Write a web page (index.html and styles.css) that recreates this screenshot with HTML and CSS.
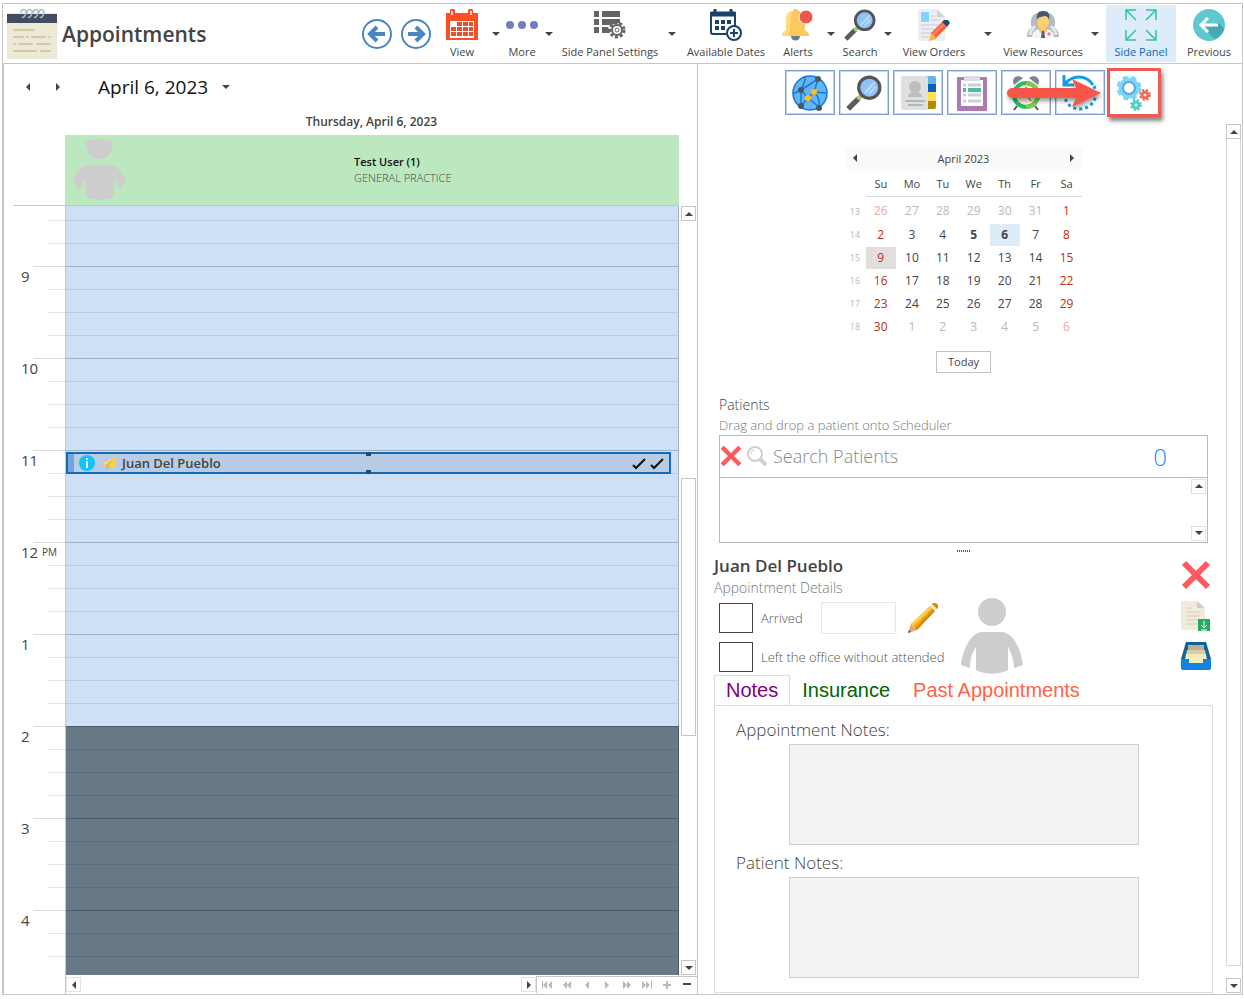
FILE: index.html
```html
<!DOCTYPE html>
<html lang="en">
<head>
    <meta charset="UTF-8">
    <meta name="viewport" content="width=device-width, initial-scale=1.0">
    <title>Appointments</title>
    <link rel="stylesheet" href="styles.css">
</head>
<body>
    <!-- shared glyphs -->
    <svg class="sprite" width="0" height="0" aria-hidden="true">
        <symbol id="tri-up" viewBox="0 0 8 8"><path d="M4 2l4 4H0z"/></symbol>
        <symbol id="tri-down" viewBox="0 0 8 8"><path d="M0 2h8L4 6z"/></symbol>
        <symbol id="tri-left" viewBox="0 0 8 8"><path d="M6 0v8L2 4z"/></symbol>
        <symbol id="tri-right" viewBox="0 0 8 8"><path d="M2 0v8l4-4z"/></symbol>
        <symbol id="magnifier" viewBox="0 0 34 34">
            <path d="M2 32L12 22" stroke="#5b5b5b" stroke-width="5"/>
            <path d="M11 23l3-3" stroke="#a5cf6b" stroke-width="4"/>
            <path d="M14 20l2-2" stroke="#555" stroke-width="2"/>
            <circle cx="22" cy="12" r="10" fill="#8fc1fb" stroke="#555" stroke-width="3"/>
            <path d="M18 17l9-10M22 18l6-7" stroke="#b9dafd" stroke-width="2"/>
        </symbol>
        <symbol id="person" viewBox="0 0 62 76">
            <circle cx="31" cy="14" r="14" fill="#cdcdcd"/>
            <path d="M20 34h22c10 2 18 16 20 33l-9 3c0-8-3-16-6-21v23c-10 5-22 5-32 0V49c-4 5-6 13-6 21l-9-3C2 50 10 36 20 34z" fill="#cdcdcd"/>
        </symbol>
        <symbol id="cross" viewBox="0 0 30 30"><path d="M3 3l24 24M27 3L3 27" stroke="#ff5a5f" stroke-width="6"/></symbol>
    </svg>

    <div class="app">
        <header class="toolbar">
            <div class="brand">
                <svg width="50" height="50" viewBox="0 0 50 50">
                    <rect y="4" width="50" height="46" fill="#ece9d7"/>
                    <rect y="5" width="50" height="9" fill="#434c63"/>
                    <g fill="none" stroke="#aeb8c4" stroke-width="1.500"><path d="M14 4c0-5 6-4 5 0s-3 5-4 4M20 4c0-5 6-4 5 0s-3 5-4 4M26 4c0-5 6-4 5 0s-3 5-4 4M32 4c0-5 6-4 5 0s-3 5-4 4"/></g>
                    <g stroke="#cfcaa8" stroke-width="2" stroke-linecap="round"><path d="M7 21h20M7 28h9M20 28h1M25 28h13M42 28h1M7 35h1M12 35h13M30 35h13M7 42h22M34 42h9"/></g>
                </svg>
                <h1>Appointments</h1>
            </div>
            <button class="round" aria-label="Back">
                <svg width="30" height="30" viewBox="0 0 30 30"><circle cx="15" cy="15" r="14" fill="none" stroke="#4a86c2" stroke-width="2"/><path d="M23 15H8M15 8l-7 7 7 7" fill="none" stroke="#4a86c2" stroke-width="4"/></svg>
            </button>
            <button class="round" aria-label="Forward">
                <svg width="30" height="30" viewBox="0 0 30 30"><circle cx="15" cy="15" r="14" fill="none" stroke="#4a86c2" stroke-width="2"/><path d="M7 15h15M15 8l7 7-7 7" fill="none" stroke="#4a86c2" stroke-width="4"/></svg>
            </button>
            <button class="tool">
                <svg width="32" height="32" viewBox="0 0 32 32"><path d="M0 4h4V2a2 2 0 0 1 5 0v2h13V2a2 2 0 0 1 5 0v2h5v27H0z" fill="#fd4f23"/><path d="M6 2v4M25 2v4" stroke="#fff" stroke-width="1.500"/><path d="M4 12h24v17H4z" fill="#fff"/><path d="M11 13h5v4h-5zM17 13h5v4h-5zM23 13h4v4h-4zM5 18h5v4H5zM11 18h5v4h-5zM17 18h5v4h-5zM23 18h4v4h-4zM5 23h5v4H5zM11 23h5v4h-5zM17 23h5v4h-5zM23 23h4v4h-4z" fill="#e8502b"/></svg>
                <span>View</span>
            </button>
            <button class="caret" aria-label="View menu"><svg><use href="#tri-down"/></svg></button>
            <button class="tool">
                <svg width="32" height="32" viewBox="0 0 32 32" fill="#7180c4"><circle cx="4" cy="16" r="4"/><circle cx="16" cy="16" r="4"/><circle cx="28" cy="16" r="4"/></svg>
                <span>More</span>
            </button>
            <button class="caret" aria-label="More menu"><svg><use href="#tri-down"/></svg></button>
            <button class="tool">
                <svg width="32" height="32" viewBox="0 0 32 32"><path d="M0 2h5v6H0zM8 2h18v6H8zM0 10h5v6H0zM8 10h18v4l-10 2H8zM0 18h5v6H0zM8 18h6l2 6H8z" fill="#646464"/><circle cx="23" cy="21" r="7" fill="none" stroke="#646464" stroke-width="3" stroke-dasharray="3 2"/><circle cx="23" cy="21" r="5" fill="#fff" stroke="#646464" stroke-width="2"/><circle cx="23" cy="21" r="2" fill="none" stroke="#646464"/></svg>
                <span>Side Panel Settings</span>
            </button>
            <button class="caret" aria-label="Side panel settings menu"><svg><use href="#tri-down"/></svg></button>
            <button class="tool">
                <svg width="32" height="32" viewBox="0 0 32 32" fill="none" stroke="#1b426c"><path d="M17 25H3q-2 0-2-2V4h24v13" stroke-width="2"/><path d="M1 5h24" stroke-width="5"/><path d="M5 0v5M21 0v5" stroke-width="3"/><path d="M5 13h4M11 13h4M17 13h4M5 19h4M11 19h4" stroke-width="4"/><circle cx="24" cy="24" r="7" fill="#fff" stroke-width="2"/><path d="M20 24h8M24 20v8" stroke-width="2"/></svg>
                <span>Available Dates</span>
            </button>
            <button class="tool">
                <svg width="32" height="32" viewBox="0 0 32 32"><path d="M9 27h9c0 6-9 6-9 0z" fill="#647c92"/><path d="M4 12c0-6 2-10 7-10 0-3 5-3 5 0 5 0 7 4 7 10v9l4 4v2H0v-2l4-4z" fill="#fdc95e"/><path d="M4 12c0-6 2-10 7-10-2 4-3 8-3 20l-3 5H0v-2l4-4z" fill="#ffd97c"/><circle cx="24" cy="8" r="7" fill="#e75b4f" stroke="#fff"/></svg>
                <span>Alerts</span>
            </button>
            <button class="caret" aria-label="Alerts menu"><svg><use href="#tri-down"/></svg></button>
            <button class="tool"><svg width="32" height="32"><use href="#magnifier"/></svg><span>Search</span></button>
            <button class="caret" aria-label="Search menu"><svg><use href="#tri-down"/></svg></button>
            <button class="tool">
                <svg width="32" height="32" viewBox="0 0 32 32"><path d="M0 1q0-1 1-1h18l8 8v24H1q-1 0-1-1z" fill="#eceff2"/><path d="M19 0l8 8h-8z" fill="#ced5df"/><path d="M3 3h8v10H3z" fill="#80d5fc"/><path d="M13 7h4M13 11h9M3 16h17M3 20h14M3 24h11M3 28h8" stroke="#d2d7df" stroke-width="1.500"/><path d="M11 32l2-8 6 6z" fill="#f8b64c"/><path d="M13 24l11-11 5 5-11 11z" fill="#ff5a42"/><path d="M14 25l11-11 2 2-11 11z" fill="#ff8354"/><path d="M24 13l2-2h4l2 3-3 4z" fill="#294b61"/></svg>
                <span>View Orders</span>
            </button>
            <button class="caret" aria-label="View orders menu"><svg><use href="#tri-down"/></svg></button>
            <button class="tool">
                <svg width="32" height="32" viewBox="0 0 32 32"><g fill="#b7bbc0"><path d="M0 28c0-7 3-8 5-10-2-2-2-12 5-14l5 14-1 10zM32 28c0-7-3-8-5-10 2-2 2-12-5-14l-5 14 1 10z"/></g><path d="M3 26c0-5 4-7 5-9M29 26c0-5-4-7-5-9" stroke="#e4e6e8" stroke-width="3" fill="none"/><path d="M5 29c0-6 3-8 7-9h8c4 1 7 3 7 9z" fill="#f4f5f7"/><path d="M12 17h8v5l-4 4-4-4z" fill="#f5c072"/><path d="M15 22h2l1 7h-4z" fill="#4a5a73"/><ellipse cx="16" cy="12" rx="6" ry="8" fill="#ffd071"/><path d="M10 11c-1-6 1-9 6-9 6 0 7 3 6 9-1-3-2-4-4-4-3 1-6 0-8 4z" fill="#45566d"/><path d="M22 23v4M20 25h4" stroke="#f16459"/></svg>
                <span>View Resources</span>
            </button>
            <button class="caret" aria-label="View resources menu"><svg><use href="#tri-down"/></svg></button>
            <button class="tool active">
                <svg width="34" height="32" viewBox="0 0 34 32" fill="none" stroke="#2fc3a2" stroke-width="1.500"><path d="M2 11V1h10M2 1l10 10M22 1h10v10M32 1L22 11M2 21v10h10M2 31l10-10M22 31h10V21M32 31L22 21"/></svg>
                <span>Side Panel</span>
            </button>
            <button class="tool">
                <svg width="32" height="32" viewBox="0 0 32 32"><circle cx="16" cy="16" r="16" fill="#5ec8cf"/><path d="M9 18l13 12c4-2 8-6 9-11l-5-5z" fill="#45a8b4"/><path d="M25 16H8M15 9l-7 7 7 7" fill="none" stroke="#fff" stroke-width="3"/></svg>
                <span>Previous</span>
            </button>
        </header>

        <main class="content">
            <section class="scheduler">
                <div class="date-nav">
                    <button aria-label="Previous day"><svg><use href="#tri-left"/></svg></button>
                    <button aria-label="Next day"><svg><use href="#tri-right"/></svg></button>
                    <button class="date">April 6, 2023 <svg><use href="#tri-down"/></svg></button>
                </div>
                <h2 class="day-title">Thursday, April 6, 2023</h2>
                <div class="resource-row">
                    <div class="resource">
                        <svg class="avatar" width="54" height="62" viewBox="0 0 54 62" fill="#cdcdcd"><path d="M14 3c8-4 18-4 27 0 0 10-5 17-13 17S14 14 14 3zM16 26h22c8 1 12 7 16 17l-6 8-6-11v18c-9 4-19 4-28 0V40L7 51l-6-8C4 33 8 27 16 26z"/></svg>
                        <p><b>Test User (1)</b><span>GENERAL PRACTICE</span></p>
                    </div>
                </div>
                <div class="day-view">
                    <div class="hours">
                        <div class="hour partial"><div class="time"></div><div class="slots"></div></div>
                        <div class="hour"><div class="time">9</div><div class="slots"></div></div>
                        <div class="hour"><div class="time">10</div><div class="slots"></div></div>
                        <div class="hour">
                            <div class="time">11</div>
                            <div class="slots">
                                <div class="appointment">
                                    <svg width="16" height="16" viewBox="0 0 16 16"><circle cx="8" cy="8" r="8" fill="#12c4fa"/><path d="M7 4h2M8 6v7" stroke="#fff" stroke-width="2"/></svg>
                                    <svg width="16" height="14" viewBox="0 0 16 14"><path d="M16 0L0 8l5 1z" fill="#f9dc62"/><path d="M16 0L5 9l1 5 2-3z" fill="#e9b73a"/><path d="M16 0L7 10l6 3z" fill="#fbd04e"/></svg>
                                    <span>Juan Del Pueblo</span>
                                    <svg class="checks" width="34" height="14" viewBox="0 0 34 14" fill="none" stroke="#111" stroke-width="2"><path d="M3 9l3 3 9-9M21 9l3 3 9-9"/></svg>
                                </div>
                            </div>
                        </div>
                        <div class="hour"><div class="time">12 <small>PM</small></div><div class="slots"></div></div>
                        <div class="hour"><div class="time">1</div><div class="slots"></div></div>
                        <div class="hour closed"><div class="time">2</div><div class="slots"></div></div>
                        <div class="hour closed"><div class="time">3</div><div class="slots"></div></div>
                        <div class="hour closed"><div class="time">4</div><div class="slots"></div></div>
                    </div>
                    <div class="scrollbar">
                        <button aria-label="Scroll up"><svg><use href="#tri-up"/></svg></button>
                        <div class="thumb"></div>
                        <button aria-label="Scroll down"><svg><use href="#tri-down"/></svg></button>
                    </div>
                </div>
                <div class="bottom-bar">
                    <button class="scroll-btn" aria-label="Scroll left"><svg><use href="#tri-left"/></svg></button>
                    <button class="scroll-btn" aria-label="Scroll right"><svg><use href="#tri-right"/></svg></button>
                    <div class="navigator">
                        <button aria-label="First"><svg viewBox="0 0 12 8"><path d="M1 0h1v8H1zM6 0v8L2 4zM11 0v8L7 4z"/></svg></button>
                        <button aria-label="Previous page"><svg viewBox="0 0 12 8"><path d="M6 0v8L2 4zM10 0v8L6 4z"/></svg></button>
                        <button aria-label="Previous"><svg viewBox="0 0 12 8"><path d="M8 0v8L4 4z"/></svg></button>
                        <button aria-label="Next"><svg viewBox="0 0 12 8"><path d="M4 0v8l4-4z"/></svg></button>
                        <button aria-label="Next page"><svg viewBox="0 0 12 8"><path d="M2 0v8l4-4zM6 0v8l4-4z"/></svg></button>
                        <button aria-label="Last"><svg viewBox="0 0 12 8"><path d="M1 0v8l4-4zM5 0v8l4-4zM10 0h1v8h-1z"/></svg></button>
                        <button aria-label="Zoom in"><svg viewBox="0 0 12 8"><path d="M5 0h2v3h3v2H7v3H5V5H2V3h3z"/></svg></button>
                        <button class="on" aria-label="Zoom out"><svg viewBox="0 0 12 8"><path d="M2 2h8v2H2z"/></svg></button>
                    </div>
                </div>
            </section>

            <aside class="side-panel">
                <div class="icon-tabs">
                    <button aria-label="Network">
                        <svg width="36" height="36" viewBox="0 0 36 36"><circle cx="18" cy="18" r="17" fill="#64b5f6"/><g fill="none" stroke="#1976d2" stroke-width="1.500"><circle cx="18" cy="18" r="17"/><path d="M26 4L9 15M9 15L9 31M9 15l7 8M22 17l-6 6-7 8M22 17L26 4M22 17l12 1M16 23l11 9M22 17c4 4 6 9 5 15M1 19l8-4c3-6 5-10 4-13"/></g><g fill="#455a64"><circle cx="26" cy="4" r="3"/><circle cx="9" cy="15" r="3"/><circle cx="9" cy="31" r="3"/><circle cx="27" cy="33" r="3"/></g><g fill="#ffc107"><circle cx="22" cy="17" r="3"/><circle cx="16" cy="23" r="3"/></g></svg>
                    </button>
                    <button aria-label="Find"><svg width="36" height="36"><use href="#magnifier"/></svg></button>
                    <button aria-label="Contacts">
                        <svg width="36" height="36" viewBox="0 0 36 36"><path d="M24 1h10q2 0 2 2v6H24z" fill="#64b5e2"/><path d="M24 9h12v8H24z" fill="#0560c0"/><path d="M24 17h12v9H24z" fill="#ffe14f"/><path d="M24 26h12v6q0 2-2 2H24z" fill="#b28a05"/><rect x="1" y="1" width="27" height="34" rx="2" fill="#e0e0e0"/><circle cx="15" cy="12" r="6" fill="#bdbdbd"/><path d="M8 22c0-4 4-5 7-5s7 1 7 5z" fill="#bdbdbd"/><path d="M5 26h20M8 30h15" stroke="#78909c"/></svg>
                    </button>
                    <button aria-label="Clipboard">
                        <svg width="30" height="36" viewBox="0 0 30 36"><rect y="2" width="30" height="34" rx="1" fill="#ad7bae"/><path d="M4 5h22v26H4z" fill="#fff"/><path d="M7 1h16v5H7z" fill="#dcdde2"/><path d="M6 10h3M11 10h13M6 20h3M11 20h13M6 26h3M11 26h13" stroke="#ccd0d3" stroke-width="3"/><path d="M6 15h3M11 15h13" stroke="#4fb9a5" stroke-width="4"/></svg>
                    </button>
                    <button aria-label="Alarm">
                        <svg width="36" height="36" viewBox="0 0 36 36"><path d="M5 7c0-6 6-7 10-4L6 10zM31 7c0-6-6-7-10-4l9 7z" fill="#7d8590"/><path d="M9 31l-3 4M27 31l3 4" stroke="#555" stroke-width="2"/><circle cx="18" cy="20" r="12" fill="#fff6d8" stroke="#22c064" stroke-width="4"/><path d="M18 8a12 12 0 0 1 0 24" fill="none" stroke="#7bcb4c" stroke-width="4"/><path d="M18 12v8l5 6" stroke="#444" fill="none"/></svg>
                    </button>
                    <button aria-label="History">
                        <svg width="36" height="36" viewBox="0 0 36 36" fill="none" stroke="#169de5" stroke-width="3"><path d="M2 0v10h10M3 9C10 0 24-1 31 10"/><path d="M32 11c6 13-4 23-14 23S1 26 3 16" stroke-dasharray="3 3"/></svg>
                    </button>
                    <button class="selected" aria-label="Settings">
                        <svg width="36" height="36" viewBox="0 0 36 36" fill="none"><circle cx="13" cy="13" r="11" stroke="#7dd5f7" stroke-width="3" stroke-dasharray="5 4"/><circle cx="13" cy="13" r="8" stroke="#7dd5f7" stroke-width="5"/><circle cx="13" cy="13" r="6" stroke="#58a8dc" stroke-width="2"/><circle cx="29" cy="20" r="5" stroke="#f46a55" stroke-width="2" stroke-dasharray="2 2"/><circle cx="29" cy="20" r="3" stroke="#f46a55" stroke-width="3"/><circle cx="20" cy="30" r="5" stroke="#4bd3ba" stroke-width="2" stroke-dasharray="2 2"/><circle cx="20" cy="30" r="3" stroke="#4bd3ba" stroke-width="3"/></svg>
                    </button>
                    <svg class="pointer" width="96" height="32" viewBox="0 0 96 32"><path d="M6 11h64L66 2l29 14-29 14 4-9H6a5 5 0 0 1 0-10z" fill="#f9564a"/></svg>
                </div>

                <div class="side-body">
                    <div class="side-content">
                        <div class="calendar">
                            <div class="month">
                                <button aria-label="Previous month"><svg><use href="#tri-left"/></svg></button>
                                <span>April 2023</span>
                                <button aria-label="Next month"><svg><use href="#tri-right"/></svg></button>
                            </div>
                            <table>
                                <thead>
                                    <tr><td></td><th>Su</th><th>Mo</th><th>Tu</th><th>We</th><th>Th</th><th>Fr</th><th>Sa</th></tr>
                                </thead>
                                <tbody>
                                    <tr><th>13</th><td class="off">26</td><td class="off">27</td><td class="off">28</td><td class="off">29</td><td class="off">30</td><td class="off">31</td><td>1</td></tr>
                                    <tr><th>14</th><td>2</td><td>3</td><td>4</td><td><b>5</b></td><td class="picked"><b>6</b></td><td>7</td><td>8</td></tr>
                                    <tr><th>15</th><td class="today">9</td><td>10</td><td>11</td><td>12</td><td>13</td><td>14</td><td>15</td></tr>
                                    <tr><th>16</th><td>16</td><td>17</td><td>18</td><td>19</td><td>20</td><td>21</td><td>22</td></tr>
                                    <tr><th>17</th><td>23</td><td>24</td><td>25</td><td>26</td><td>27</td><td>28</td><td>29</td></tr>
                                    <tr><th>18</th><td>30</td><td class="off">1</td><td class="off">2</td><td class="off">3</td><td class="off">4</td><td class="off">5</td><td class="off">6</td></tr>
                                </tbody>
                            </table>
                            <button class="today-btn">Today</button>
                        </div>

                        <div class="patients">
                            <label for="search">Patients</label>
                            <p>Drag and drop a patient onto Scheduler</p>
                            <div class="search-box">
                                <button aria-label="Clear"><svg width="22" height="22"><use href="#cross"/></svg></button>
                                <svg width="20" height="20" viewBox="0 0 20 20" fill="none" stroke="#cfcfcf"><circle cx="8" cy="8" r="7" stroke-width="2"/><path d="M13 13l6 6" stroke-width="4"/><path d="M4 8q0-4 4-4"/></svg>
                                <input id="search" type="text" placeholder="Search Patients">
                                <span class="count">0</span>
                            </div>
                            <div class="patient-list">
                                <button class="scroll-btn" aria-label="List up"><svg><use href="#tri-up"/></svg></button>
                                <button class="scroll-btn" aria-label="List down"><svg><use href="#tri-down"/></svg></button>
                            </div>
                        </div>
                        <div class="splitter"></div>

                        <div class="details">
                            <div class="details-form">
                                <h2>Juan Del Pueblo</h2>
                                <p>Appointment Details</p>
                                <div class="details-cols">
                                    <div class="checks-col">
                                        <div class="check-row">
                                            <input type="checkbox" id="arrived"><label for="arrived">Arrived</label>
                                            <input type="text" class="arrival" aria-label="Arrival time">
                                            <button aria-label="Edit">
                                                <svg width="30" height="30" viewBox="0 0 30 30"><path d="M0 30l3-9 6 6z" fill="#e3a66f"/><path d="M0 30l1-3 2 2z" fill="#555"/><path d="M3 21L22 3l5 5L9 27z" fill="#f5ad12"/><path d="M3 21L22 3l2 2L5 23z" fill="#fdd04e"/><path d="M7 25L25 6l2 2L9 27z" fill="#d98b08"/><path d="M22 3l2-2 5 5-2 2z" fill="#f4ecb5"/><path d="M25 0h3l2 2v3l-1 1-5-5z" fill="#d98b08"/></svg>
                                            </button>
                                        </div>
                                        <div class="check-row">
                                            <input type="checkbox" id="left"><label for="left">Left the office without attended</label>
                                        </div>
                                    </div>
                                    <svg class="photo" width="62" height="76"><use href="#person"/></svg>
                                </div>
                            </div>
                            <div class="actions">
                                <button aria-label="Delete"><svg width="30" height="30"><use href="#cross"/></svg></button>
                                <button aria-label="Download note">
                                    <svg width="30" height="30" viewBox="0 0 30 30"><path d="M0 0h16l8 7v22H0z" fill="#efebde"/><path d="M16 0l8 7h-8z" fill="#d5cdbb"/><path d="M5 7h6M5 11h14M5 15h14M5 19h12M5 23h11" stroke="#d5cfb6"/><path d="M17 18h12v12H17z" fill="#21ae5e"/><path d="M23 20v7M20 24l3 3 3-3M20 29h6" stroke="#fff" fill="none"/></svg>
                                </button>
                                <button aria-label="Archive">
                                    <svg width="30" height="28" viewBox="0 0 30 28"><path d="M5 0h20l5 17v4H0v-4z" fill="#10649d"/><path d="M7 3h16v6H7z" fill="#bcae90"/><path d="M6 8h18l1 6H5z" fill="#d8cda8"/><path d="M5 12h20l1 6-4 4H8l-4-4z" fill="#f3edbe"/><path d="M0 17h8v4h14v-4h8v9q0 2-2 2H2q-2 0-2-2z" fill="#1381e0"/></svg>
                                </button>
                            </div>
                        </div>

                        <nav class="tabs">
                            <a class="notes" href="#notes">Notes</a>
                            <a class="insurance" href="#insurance">Insurance</a>
                            <a class="past" href="#past">Past Appointments</a>
                        </nav>
                        <div class="tab-page" id="notes">
                            <label for="app-notes">Appointment Notes:</label>
                            <textarea id="app-notes"></textarea>
                            <label for="pat-notes">Patient Notes:</label>
                            <textarea id="pat-notes"></textarea>
                        </div>
                    </div>
                    <div class="scrollbar side-scroll">
                        <button aria-label="Panel up"><svg><use href="#tri-up"/></svg></button>
                        <div class="thumb"></div>
                        <button aria-label="Panel down"><svg><use href="#tri-down"/></svg></button>
                    </div>
                </div>
            </aside>
        </main>
    </div>
</body>
</html>
```
FILE: styles.css
```css
* {
    box-sizing: border-box;
    margin: 0;
    padding: 0;
}
body {
    font-family: "Open Sans", "Noto Sans", sans-serif;
    font-size: 11px;
    color: #444;
    background: #fff;
    height: 100vh;
    padding: 3px 1px 4px 2px;
    overflow: hidden;
}
button {
    font: inherit;
    color: inherit;
    background: none;
    border: none;
    display: flex;
    align-items: center;
    justify-content: center;
    cursor: pointer;
}
button svg {
    flex: none;
}
.sprite {
    position: absolute;
}
.app {
    height: 100%;
    display: flex;
    flex-direction: column;
    border: 1px solid #c6c6c6;
}

/* toolbar */
.toolbar {
    display: grid;
    grid-template-columns: 1fr 39px 39px 54px 13px 40px 14px 108px 15px 94px 50px 16px 42px 14px 78px 29px 82px 22px 70px 66px;
    height: 60px;
    border-bottom: 1px solid #c6c6c6;
}
.brand {
    display: flex;
    align-items: center;
    gap: 5px;
    padding-left: 4px;
}
.brand h1 {
    font-size: 21px;
    font-weight: 600;
}
.tool {
    flex-direction: column;
    justify-content: flex-start;
    gap: 3px;
    padding-top: 4px;
    margin: 1px 0;
    line-height: 16px;
    white-space: nowrap;
}
.tool.active {
    background: #deebf8;
    color: #0a6cc4;
}
.caret svg,
.date-nav svg,
.scrollbar svg,
.scroll-btn svg,
.month svg {
    width: 8px;
    height: 8px;
    fill: #444;
}

/* scheduler */
.content {
    flex: 1;
    min-height: 0;
    display: grid;
    grid-template-columns: 695fr 544fr;
}
.scheduler {
    display: flex;
    flex-direction: column;
    min-width: 0;
    min-height: 0;
    border-left: 1px solid #c6c6c6;
    border-right: 1px solid #c6c6c6;
}
.date-nav {
    display: flex;
    align-items: center;
    height: 46px;
    padding-left: 9px;
}
.date-nav button {
    width: 30px;
    height: 30px;
}
.date-nav .date {
    width: auto;
    gap: 14px;
    margin-left: 25px;
    font-size: 19px;
    color: #111;
}
.day-title {
    font-size: 12px;
    font-weight: 600;
    line-height: 23px;
    text-align: center;
    padding-left: 42px;
}
.resource-row {
    padding: 2px 18px 0 61px;
}
.resource {
    display: flex;
    align-items: center;
    height: 70px;
    background: #bce8c0;
}
.avatar {
    margin-left: 7px;
}
.resource p {
    margin-left: 228px;
    line-height: 16px;
}
.resource b {
    display: block;
    color: #111;
    font-weight: 600;
}
.resource span {
    font-weight: 300;
}
.day-view {
    flex: 1;
    min-height: 0;
    display: flex;
    gap: 2px;
}
.hours {
    flex: 1;
    overflow: hidden;
    border-top: 1px solid #c6c6c6;
    margin-left: 9px;
}
.hour {
    display: flex;
    height: 92px;
}
.hour.partial {
    height: 60px;
}
.time {
    width: 53px;
    padding: 0 6px 0 8px;
    font-size: 15px;
    line-height: 20px;
    white-space: nowrap;
    border-right: 1px solid #c6c6c6;
    background:
        linear-gradient(#dcdcdc, #dcdcdc) right top / 32px 1px no-repeat,
        repeating-linear-gradient(to top, transparent 0 22px, #e6e6e6 22px 23px) right / 18px 100% no-repeat;
}
.partial .time,
.partial .slots {
    background-size: 0 0, auto;
}
.partial .time {
    background-size: 0 0, 18px 100%;
}
.time small {
    font-size: 10px;
    vertical-align: 2px;
}
.slots {
    flex: 1;
    position: relative;
    border-right: 1px solid #9db0c3;
    background:
        linear-gradient(#9fb0c2, #9fb0c2) top / 100% 1px no-repeat,
        repeating-linear-gradient(to top, #cee0f5 0 22px, #b9cbdd 22px 23px);
}
.closed .slots {
    border-color: #4c5b69;
    background:
        linear-gradient(#4c5b69, #4c5b69) top / 100% 1px no-repeat,
        repeating-linear-gradient(to top, #697886 0 22px, #5e6d7b 22px 23px);
}
.appointment {
    position: absolute;
    top: 2px;
    left: 0;
    right: 7px;
    height: 22px;
    display: flex;
    align-items: center;
    gap: 6px;
    padding: 0 5px 0 11px;
    border: 2px solid #0f6cbd;
    background: #b8cce4;
    box-shadow: inset 6px 0 #76a3df;
    font-size: 13px;
    font-weight: 600;
}
.appointment span {
    margin-left: -1px;
}
.appointment .checks {
    margin-left: auto;
}
/* resize handles on the top and bottom edge */
.appointment::before,
.appointment::after {
    content: "";
    position: absolute;
    left: 50%;
    width: 5px;
    height: 4px;
    margin-left: -3px;
    background: #2b4a6b;
}
.appointment::before {
    top: -2px;
}
.appointment::after {
    bottom: -2px;
}
.scrollbar {
    width: 15px;
    display: flex;
    flex-direction: column;
    margin: 1px 1px 0 0;
}
.scrollbar button,
.scroll-btn {
    width: 15px;
    height: 15px;
    border: 1px solid #c6c6c6;
}
.scroll-btn {
    border-color: #e2e2e2;
}
.scrollbar .thumb {
    height: 258px;
    border: 1px solid #c6c6c6;
}
.day-view .thumb {
    margin: 257px 0 auto;
}
.bottom-bar {
    display: flex;
    align-items: center;
    height: 19px;
    padding: 1px 0;
    margin-left: 61px;
    border-left: 1px solid #c6c6c6;
}
.bottom-bar .scroll-btn + .scroll-btn {
    margin-left: auto;
}
.navigator {
    display: flex;
    justify-content: space-around;
    width: 161px;
    height: 17px;
    border: 1px solid #c6c6c6;
    border-width: 1px 0 0 1px;
}
.navigator button {
    width: 20px;
}
.navigator svg {
    width: 12px;
    height: 8px;
    fill: #b8b8b8;
}
.navigator .on svg {
    fill: #444;
}

/* side panel */
.side-panel {
    display: flex;
    flex-direction: column;
    min-width: 0;
    min-height: 0;
    padding-right: 1px;
}
.icon-tabs {
    position: relative;
    display: flex;
    justify-content: center;
    gap: 4px;
    height: 60px;
    padding: 6px 0 9px 5px;
}
.icon-tabs button {
    width: 50px;
    height: 45px;
    border: 1px solid #7f9fca;
    outline: 1px solid #c8d7ea;
    outline-offset: -2px;
}
.icon-tabs .selected {
    border-color: #4d5b78;
    outline: 3px solid #f05a50;
    outline-offset: -1px;
    box-shadow: 2px 4px 4px 2px #888;
}
.pointer {
    position: absolute;
    top: 13px;
    right: 139px;
    filter: drop-shadow(1px 3px 2px rgba(0, 0, 0, 0.4));
}
.side-body {
    flex: 1;
    min-height: 0;
    display: flex;
}
.side-content {
    flex: 1;
    min-width: 0;
    display: flex;
    flex-direction: column;
    padding: 23px 13px 1px 16px;
}
.side-scroll {
    margin: 0 0 1px;
}
.side-scroll .thumb {
    flex: 1;
    border-top: none;
    border-color: #d8d8d8;
}
.side-scroll .thumb + button {
    margin-top: 12px;
}
.calendar {
    width: 238px;
    margin: 0 auto;
}
.month {
    display: flex;
    align-items: center;
    justify-content: space-between;
    height: 22px;
    background: #fafafa;
}
.month button {
    width: 21px;
    height: 22px;
}
.calendar table {
    width: 100%;
    table-layout: fixed;
    border-collapse: collapse;
    text-align: center;
    line-height: 22px;
}
.calendar thead td {
    width: 21px;
}
.calendar thead th {
    font-weight: 400;
    height: 27px;
    padding-top: 3px;
    border-bottom: 1px solid #d9d9d9;
}
.calendar tbody::before {
    content: "";
    display: block;
    height: 4px;
}
.calendar tbody th {
    font-size: 9px;
    font-weight: 400;
    color: #b9b9b9;
}
.calendar tbody td {
    height: 23px;
    font-size: 12px;
    border-right: 1px solid #fff;
    border-bottom: 1px solid #fff;
}
.calendar tbody td:nth-child(2),
.calendar tbody td:last-child {
    color: #c42b10;
}
.calendar tbody td.off {
    color: #b9b9b9;
}
.calendar tbody td.off:nth-child(2),
.calendar tbody td.off:last-child {
    color: #e8a99c;
}
.calendar .picked {
    background: #deebf8;
}
.calendar .today {
    background: #e0dfde;
}
.today-btn {
    width: 55px;
    height: 22px;
    margin: 12px auto 0;
    border: 1px solid #c2c2c2;
}
.patients {
    padding: 22px 5px 0;
}
.patients label {
    display: block;
    font-size: 14px;
    line-height: 20px;
    font-weight: 300;
}
.patients p {
    font-size: 13px;
    line-height: 20px;
    font-weight: 300;
    color: #777;
}
.search-box {
    display: flex;
    align-items: center;
    gap: 5px;
    height: 43px;
    border: 1px solid #b9b9b9;
}
.search-box input {
    flex: 1;
    min-width: 0;
    font: 300 18px "Open Sans", sans-serif;
    border: none;
    outline: none;
    margin-left: 1px;
}
.search-box input::placeholder {
    color: #888;
}
.count {
    font-size: 24px;
    font-weight: 300;
    color: #1a8cff;
    padding-right: 40px;
}
.patient-list {
    display: flex;
    flex-direction: column;
    justify-content: space-between;
    align-items: flex-end;
    height: 65px;
    padding: 1px;
    border: 1px solid #b9b9b9;
    border-top: none;
}
.splitter {
    width: 13px;
    height: 2px;
    margin: 7px auto 3px;
    background: repeating-linear-gradient(to right, #555 0 1px, #fff 1px 2px);
}
.details {
    display: flex;
    justify-content: space-between;
    padding: 0 2px 1px 0;
}
.details h2 {
    font-size: 17px;
    line-height: 22px;
    font-weight: 600;
}
.details p {
    font-size: 14px;
    line-height: 21px;
    font-weight: 300;
    color: #777;
}
.details-cols {
    display: flex;
    gap: 14px;
}
.checks-col {
    display: flex;
    flex-direction: column;
    width: 233px;
    gap: 7px;
    padding: 4px 0 0 5px;
}
.check-row {
    display: flex;
    align-items: center;
    height: 32px;
    font-size: 13px;
    font-weight: 300;
    color: #555;
}
.check-row label {
    white-space: nowrap;
}
.check-row button {
    margin-right: 9px;
}
.check-row input[type="checkbox"] {
    appearance: none;
    width: 34px;
    height: 30px;
    margin-right: 8px;
    border: 1px solid #444;
}
.check-row .arrival {
    width: 75px;
    height: 32px;
    margin: 0 12px 0 auto;
    border: 1px solid #e8e8e8;
}
.actions {
    display: flex;
    flex-direction: column;
    gap: 11px;
    padding-top: 5px;
}
.tabs {
    display: flex;
    position: relative;
    font-family: "Liberation Sans", Arial, sans-serif;
    font-size: 20px;
    line-height: 28px;
}
.tabs a {
    padding: 0 11px;
    text-decoration: none;
    border: 1px solid transparent;
    border-bottom: none;
    height: 30px;
}
.tabs .notes {
    color: #800080;
    border-color: #dcdcdc;
    background: #fff;
    margin-bottom: -1px;
}
.tabs .insurance {
    color: #006400;
}
.tabs .past {
    color: #ff6347;
    padding-left: 10px;
}
.tab-page {
    flex: 1;
    display: flex;
    flex-direction: column;
    padding: 10px 73px 0 21px;
    border: 1px solid #dcdcdc;
}
.tab-page label {
    font-size: 17px;
    line-height: 28px;
    font-weight: 300;
}
.tab-page textarea {
    height: 101px;
    margin: 0 0 4px 53px;
    border: 1px solid #cfcfcf;
    background: #f3f3f3;
    resize: none;
}
```
